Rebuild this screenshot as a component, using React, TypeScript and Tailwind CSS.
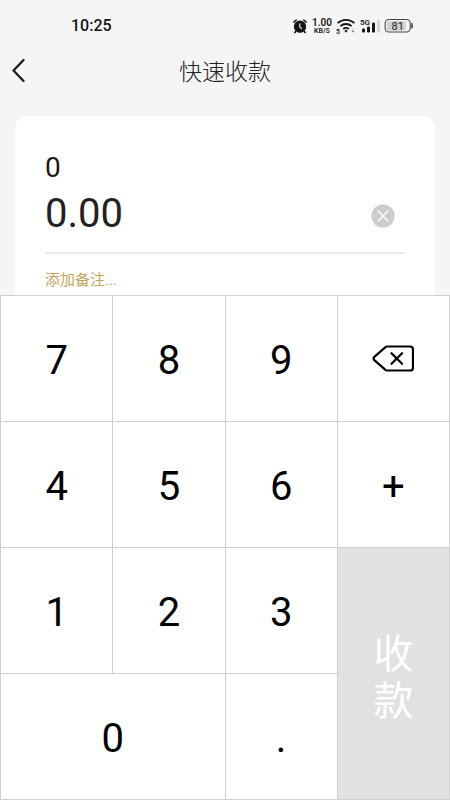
import { useState } from "react";

const StatusBar = () => {
    return (
        <div className="flex h-[52px] items-center justify-between pl-[71px] pr-9 text-[#151515]">
            <span className="text-[16px] font-medium">10:25</span>
            <div className="flex items-center">
                <svg className="mr-1 h-4 w-4" viewBox="0 0 16 16" fill="none">
                    <circle cx="8" cy="8.7" r="6.2" fill="#151515" />
                    <path d="M1.8 4 4.2 2M14.2 4 11.8 2M3.8 13.4 2.8 14.6M12.2 13.4l1 1.2" stroke="#151515" strokeWidth="1.6" strokeLinecap="round" />
                    <path d="M7.8 5.8v3.2l1.8 1.6" stroke="#f5f5f5" strokeWidth="1.1" strokeLinecap="round" />
                </svg>
                <div className="flex w-5 flex-col items-center font-semibold">
                    <span className="text-[10px] leading-[9px]">1.00</span>
                    <span className="text-[7px] leading-[8px]">KB/S</span>
                </div>
                <svg className="ml-1 h-4 w-5" viewBox="0 0 20 16" fill="none">
                    <path d="M1.6 5.2a12.4 12.4 0 0 1 16.8 0M4.4 8.2a8.2 8.2 0 0 1 11.2 0M7.2 11a4.4 4.4 0 0 1 5.6 0" stroke="#151515" strokeWidth="1.8" />
                    <path d="M10 14.8 8.3 12.8a2.6 2.6 0 0 1 3.4 0z" fill="#151515" />
                    <text x="0" y="15.5" fontSize="7" fontWeight="600" fill="#151515">5</text>
                    <path d="m15.5 11.2 1.4-1.6 1.4 1.6z" fill="#cccccc" />
                    <path d="m15.5 12.8 1.4 1.6 1.4-1.6z" fill="#555555" />
                </svg>
                <svg className="ml-1 h-4 w-5" viewBox="0 0 20 16">
                    <text x="0" y="6.5" fontSize="8" fontWeight="600" fill="#151515">5G</text>
                    <rect x="2" y="10.5" width="3" height="4" rx="1" fill="#151515" />
                    <rect x="7" y="8.5" width="3" height="6" rx="1" fill="#151515" />
                    <rect x="12" y="4.5" width="3" height="10" rx="1" fill="#151515" />
                    <rect x="17" y="1.5" width="3" height="13" rx="1" fill="#d4d4d4" />
                </svg>
                <svg className="ml-1 h-4 w-[30px]" viewBox="0 0 30 16" fill="none">
                    <rect x="2.8" y="3" width="19" height="9.5" rx="2" fill="#d0d0d0" />
                    <rect x="1.2" y="1.5" width="25" height="12.5" rx="3.6" stroke="#444444" strokeWidth="1.1" />
                    <path d="M28 5.8v4" stroke="#444444" strokeWidth="1.6" strokeLinecap="round" />
                    <text x="13.7" y="11.6" fontSize="11" textAnchor="middle" fill="#222222">81</text>
                </svg>
            </div>
        </div>
    );
};

const Key = ({ label, wide, onPress }: { label: string; wide?: boolean; onPress: (label: string) => void }) => {
    return (
        <button
            className={`h-[125px] bg-white pt-1 text-[40px] leading-none text-black ${wide ? "col-span-2" : ""}`}
            onClick={() => onPress(label)}
        >
            {label}
        </button>
    );
};

export default function App() {
    const [expression, setExpression] = useState("");

    const total = expression.split("+").reduce((sum, part) => sum + (parseFloat(part) || 0), 0);

    const press = (label: string) => {
        setExpression((value) => value + label);
    };

    return (
        <div className="flex min-h-screen flex-col bg-[#f5f5f5] font-['Roboto','Noto_Sans_CJK_SC',sans-serif]">
            <StatusBar />
            <header className="grid h-[38px] grid-cols-[40px_1fr_40px] items-center">
                <button aria-label="返回" className="pl-3">
                    <svg className="h-6 w-[14px]" viewBox="0 0 14 24" fill="none">
                        <path d="M11.5 1 1.5 11.5l10 10.5" stroke="#1a1a1a" strokeWidth="2.3" strokeLinecap="round" strokeLinejoin="round" />
                    </svg>
                </button>
                <h1 className="pt-[2px] text-center text-[23px] leading-none font-light text-[#222222]">快速收款</h1>
            </header>

            <main className="mx-[15px] mt-[26px] flex-1 rounded-t-xl bg-white px-[30px] pt-8">
                <p className="text-[28px] leading-10 text-[#1a1a1a]">{expression || "0"}</p>
                <div className="flex items-center border-b-2 border-[#ebebeb] pb-3">
                    <input
                        aria-label="金额"
                        className="h-[52px] min-w-0 flex-1 text-[40px] text-[#222222] outline-none"
                        value={total.toFixed(2)}
                        readOnly
                    />
                    <button aria-label="清除" className="mr-[10px] pt-1" onClick={() => setExpression("")}>
                        <svg className="h-6 w-6" viewBox="0 0 24 24" fill="none">
                            <circle cx="12" cy="12" r="11.6" fill="#cccccc" />
                            <path d="m7 7 10 10M17 7 7 17" stroke="#ffffff" strokeWidth="1.5" strokeLinecap="round" />
                        </svg>
                    </button>
                </div>
                <button className="mt-[14px] block text-[15px] leading-6 text-[#c9a25a]">添加备注...</button>
            </main>

            <div className="grid grid-cols-4 gap-px border border-[#cfcfcf] bg-[#cfcfcf]">
                <Key label="7" onPress={press} />
                <Key label="8" onPress={press} />
                <Key label="9" onPress={press} />
                <button
                    aria-label="删除"
                    className="flex items-center justify-center bg-white"
                    onClick={() => setExpression((value) => value.slice(0, -1))}
                >
                    <svg className="h-7 w-[42px]" viewBox="0 0 42 28" fill="none" stroke="#000000" strokeWidth="2.2" strokeLinecap="round" strokeLinejoin="round">
                        <path d="M15.2 1.5H38A3 3 0 0 1 41 4.5V22.5A3 3 0 0 1 38 25.5H15.2A3 3 0 0 1 13.2 24.7L2.3 15.1A2.1 2.1 0 0 1 2.3 11.9L13.2 2.3A3 3 0 0 1 15.2 1.5Z" />
                        <path d="m19.5 8.2 10.6 10.6M30.1 8.2 19.5 18.8" />
                    </svg>
                </button>
                <Key label="4" onPress={press} />
                <Key label="5" onPress={press} />
                <Key label="6" onPress={press} />
                <Key label="+" onPress={press} />
                <Key label="1" onPress={press} />
                <Key label="2" onPress={press} />
                <Key label="3" onPress={press} />
                <button className="row-span-2 flex flex-col items-center justify-center bg-[#e1e1e1] pt-2 text-[40px] leading-[47px] text-white">
                    <span className="w-10">收款</span>
                </button>
                <Key label="0" wide onPress={press} />
                <Key label="." onPress={press} />
            </div>
        </div>
    );
}
